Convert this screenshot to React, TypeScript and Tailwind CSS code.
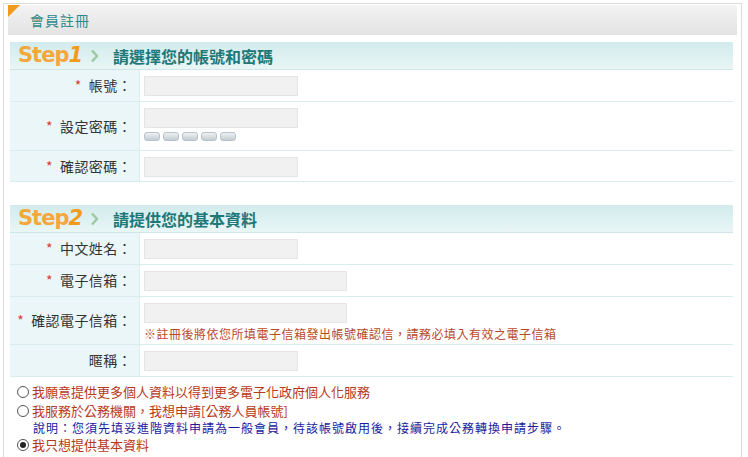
const cjk = { fontFamily: '"Noto Sans CJK TC", "Noto Sans", sans-serif' };

function Field({ w = 'w-[154px]' }: { w?: string }) {
  return <div className={`h-[20px] ${w} bg-[#f1f1f1] border border-[#e4e4e4]`} />;
}

function Row({ label, req = true, h, children }: { label: string; req?: boolean; h: string; children: React.ReactNode }) {
  return (
    <div className={`flex ${h} border-b border-[#d9ecee]`}>
      <div className="w-[130px] shrink-0 bg-[#eaf6f7] border-r border-[#d9ecee] flex items-center justify-end pr-[7px] text-[14px] text-[#333] tracking-[0.4px]">
        {req && <span className="text-[#d43d3d] mr-[7px]">*</span>}
        <span>{label}：</span>
      </div>
      <div className="flex-1 pl-[4px] pt-[6px]">{children}</div>
    </div>
  );
}

function StepBar({ n, title }: { n: string; title: string }) {
  return (
    <div className="h-[28px] flex items-center bg-gradient-to-b from-[#d2ebed] to-[#e9f6f5] border-b border-[#cfe6e8] pl-[8px]">
      <span className="text-[21px] leading-none text-[#f3a73c] font-bold" style={{ fontFamily: '"DejaVu Sans", sans-serif', letterSpacing: '-1px' }}>
        Step<span className="italic text-[#f29a1c]">{n}</span>
      </span>
      <svg className="ml-[8px]" width="9" height="14" viewBox="0 0 9 14">
        <path d="M2 1.5 L7 7 L2 12.5" fill="none" stroke="#9ccaa2" strokeWidth="2.6" strokeLinejoin="round" />
      </svg>
      <span className="ml-[14px] text-[16px] font-bold text-[#1d7878]">{title}</span>
    </div>
  );
}

function Radio({ on = false }: { on?: boolean }) {
  return (
    <span className="inline-flex items-center justify-center w-[12px] h-[12px] rounded-full border border-[#555] bg-white mr-[3px] shrink-0">
      {on && <span className="w-[6px] h-[6px] rounded-full bg-[#222]" />}
    </span>
  );
}

export default function App() {
  return (
    <div className="w-[748px] h-[457px] bg-white overflow-hidden" style={cjk}>
      <div className="ml-[3px] mt-[3px] w-[739px] h-[470px] border border-[#dcdcdc] px-[4px] pt-[1px]">
        {/* Title bar */}
        <div className="relative h-[30px] bg-gradient-to-b from-[#f3f3f3] to-[#e3e3e3] flex items-center pl-[22px] rounded-tr-[3px]">
          <div className="absolute left-0 top-0 w-0 h-0 border-t-[12px] border-t-[#f29a1c] border-r-[12px] border-r-transparent" />
          <span className="text-[14px] text-[#2e8a8a] tracking-[1px]">會員註冊</span>
        </div>

        <div className="px-[2px] pr-[4px] mt-[7px]">
          <StepBar n="1" title="請選擇您的帳號和密碼" />
          <Row label="帳號" h="h-[32px]">
            <Field />
          </Row>
          <Row label="設定密碼" h="h-[49px]">
            <Field />
            <div className="flex gap-[3px] mt-[4px]">
              {[0, 1, 2, 3, 4].map((i) => (
                <div key={i} className="w-[16px] h-[9px] rounded-[3px] border border-[#b8c2c8] bg-gradient-to-b from-[#eef2f4] to-[#c3ccd2]" />
              ))}
            </div>
          </Row>
          <Row label="確認密碼" h="h-[31px]">
            <Field />
          </Row>

          <div className="h-[23px]" />

          <StepBar n="2" title="請提供您的基本資料" />
          <Row label="中文姓名" h="h-[32px]">
            <Field />
          </Row>
          <Row label="電子信箱" h="h-[32px]">
            <Field w="w-[203px]" />
          </Row>
          <Row label="確認電子信箱" h="h-[48px]">
            <Field w="w-[203px]" />
            <div className="mt-[4px] text-[12px] leading-[14px] text-[#b84a2c] tracking-[0.5px]">
              ※註冊後將依您所填電子信箱發出帳號確認信，請務必填入有效之電子信箱
            </div>
          </Row>
          <Row label="暱稱" req={false} h="h-[32px]">
            <Field />
          </Row>

          <div className="pl-[7px] pt-[6px] text-[13px] leading-[18px] border-b border-[#d9ecee] pb-[3px]">
            <div className="flex items-center text-[#b8391a]"><Radio />我願意提供更多個人資料以得到更多電子化政府個人化服務</div>
            <div className="flex items-center text-[#b8391a] mt-[1px] h-[17px]"><Radio />我服務於公務機關，我想申請[公務人員帳號]</div>
            <div className="pl-[16px] text-[12px] tracking-[1px] text-[#1a1aa0] leading-[17px]">說明：您須先填妥進階資料申請為一般會員，待該帳號啟用後，接續完成公務轉換申請步驟。</div>
            <div className="flex items-center text-[#b8391a]"><Radio on />我只想提供基本資料</div>
          </div>
        </div>
      </div>
    </div>
  );
}
